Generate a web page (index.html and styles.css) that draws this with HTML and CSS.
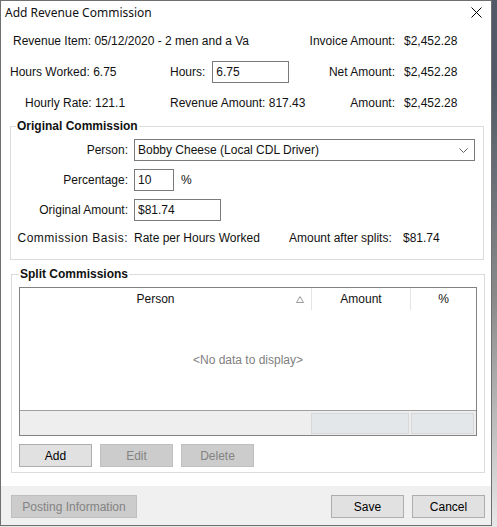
FILE: index.html
```html
<!DOCTYPE html>
<html lang="en">
<head>
    <meta charset="UTF-8">
    <title>Add Revenue Commission</title>
    <link rel="stylesheet" href="styles.css">
</head>
<body>

    <div class="dialog">

        <!-- Title bar -->
        <div class="titlebar">
            <span class="title">Add Revenue Commission</span>
            <svg class="close" width="11" height="11" viewBox="0 0 11 11">
                <path d="M0.5 0.5 L10.5 10.5 M10.5 0.5 L0.5 10.5" stroke="#000" stroke-width="1" fill="none"/>
            </svg>
        </div>

        <!-- Revenue info -->
        <div class="info">
            <div class="cell span2 pad13">Revenue Item: 05/12/2020 - 2 men and a Va</div>
            <div class="cell right">Invoice Amount:</div>
            <div class="cell value">$2,452.28</div>

            <div class="cell pad10">Hours Worked: 6.75</div>
            <div class="cell mid">Hours: <input class="box hours" type="text" value="6.75"></div>
            <div class="cell right">Net Amount:</div>
            <div class="cell value">$2,452.28</div>

            <div class="cell pad25">Hourly Rate: 121.1</div>
            <div class="cell mid">Revenue Amount: 817.43</div>
            <div class="cell right">Amount:</div>
            <div class="cell value">$2,452.28</div>
        </div>

        <!-- Original Commission -->
        <fieldset class="group original">
            <legend>Original Commission</legend>
            <div class="form-grid">
                <label>Person:</label>
                <div class="select">
                    <span>Bobby Cheese (Local CDL Driver)</span>
                    <svg width="9" height="5" viewBox="0 0 9 5">
                        <path d="M0.5 0.5 L4.5 4.5 L8.5 0.5" stroke="#606060" stroke-width="1" fill="none"/>
                    </svg>
                </div>

                <label>Percentage:</label>
                <div class="inline">
                    <input class="box pct" type="text" value="10">
                    <span class="pct-sign">%</span>
                </div>

                <label>Original Amount:</label>
                <div class="inline">
                    <input class="box amount" type="text" value="$81.74">
                </div>

                <label class="basis">Commission Basis:</label>
                <div class="inline">
                    <span class="basis-value">Rate per Hours Worked</span>
                    <span class="splits-label">Amount after splits:</span>
                    <span>$81.74</span>
                </div>
            </div>
        </fieldset>

        <!-- Split Commissions -->
        <fieldset class="group splits">
            <legend>Split Commissions</legend>
            <div class="grid">
                <div class="grid-head">
                    <div class="col col-person">
                        <span>Person</span>
                        <svg class="sort" width="8" height="7" viewBox="0 0 8 7">
                            <path d="M4 0.5 L7.5 6.5 L0.5 6.5 Z" stroke="#9a9a9a" stroke-width="1" fill="none"/>
                        </svg>
                    </div>
                    <div class="col col-amount">Amount</div>
                    <div class="col col-pct">%</div>
                </div>
                <div class="grid-body">&lt;No data to display&gt;</div>
                <div class="grid-foot">
                    <div class="foot-cell foot-amount"></div>
                    <div class="foot-cell foot-pct"></div>
                </div>
            </div>
            <div class="buttons">
                <button class="btn">Add</button>
                <button class="btn" disabled>Edit</button>
                <button class="btn" disabled>Delete</button>
            </div>
        </fieldset>

        <!-- Footer -->
        <div class="footer">
            <button class="btn wide" disabled>Posting Information</button>
            <div class="footer-right">
                <button class="btn">Save</button>
                <button class="btn">Cancel</button>
            </div>
        </div>

    </div>

</body>
</html>
```

FILE: styles.css
```css
html, body {
    margin: 0;
    padding: 0;
}
body {
    font-family: "Liberation Sans", Arial, sans-serif;
    font-size: 12px;
    color: #111;
    background: linear-gradient(#4f5a66 0, #4f5a66 80px, #8a8a8a 300px, #e6e6e6 520px);
    width: 497px;
    height: 527px;
    overflow: hidden;
}
.dialog {
    width: 490px;
    height: 524px;
    border: 1px solid #6f6f6f;
    background: #fff;
    display: flex;
    flex-direction: column;
}

/* title bar */
.titlebar {
    height: 24px;
    display: flex;
    align-items: center;
    justify-content: space-between;
    padding: 0 5px 0 4px;
    flex-shrink: 0;
}
.title {
    font-family: "Noto Sans", "Liberation Sans", sans-serif;
    font-size: 12px;
    margin-top: -1px;
}
.close {
    margin-right: 4px;
    margin-top: -2px;
}

/* info grid */
.info {
    display: grid;
    grid-template-columns: 159px 140px 95px 1fr;
    grid-auto-rows: 31px;
    flex-shrink: 0;
}
.cell {
    display: flex;
    align-items: center;
    white-space: nowrap;
}
.span2 {
    grid-column: span 2;
}
.pad13 { padding-left: 12px; }
.pad10 { padding-left: 9px; }
.pad25 { padding-left: 24px; }
.mid {
    padding-left: 10px;
}
.right {
    justify-content: flex-end;
}
.value {
    padding-left: 9px;
}

.box {
    font-family: "Liberation Sans", Arial, sans-serif;
    font-size: 12px;
    color: #111;
    height: 22px;
    box-sizing: border-box;
    border: 1px solid #7a7a7a;
    padding: 0 3px;
    margin: 0;
    outline: none;
}
.hours {
    width: 77px;
    margin-left: 7px;
}

/* group boxes */
.group {
    border: 1px solid #dcdcdc;
    margin: 1px 7px 0 9px;
    padding: 6px 8px 12px 5px;
    min-width: 0;
    flex-shrink: 0;
}
.group legend {
    font-weight: bold;
    padding: 0 1px;
    line-height: 14px;
}
.form-grid {
    display: grid;
    grid-template-columns: 112px 1fr;
    grid-template-rows: 22px 22px 22px 18px;
    column-gap: 6px;
    row-gap: 8px;
}
.form-grid label {
    display: flex;
    align-items: center;
    justify-content: flex-end;
    white-space: nowrap;
}
.form-grid .basis {
    letter-spacing: 0.5px;
}
.select {
    border: 1px solid #7a7a7a;
    display: flex;
    align-items: center;
    justify-content: space-between;
    padding: 0 6px 0 3px;
}
.inline {
    display: flex;
    align-items: center;
    white-space: nowrap;
}
.pct {
    width: 40px;
}
.pct-sign {
    margin-left: 7px;
}
.amount {
    width: 87px;
}
.basis-value {
    width: 155px;
}
.splits-label {
    width: 114px;
}

/* split commissions */
.splits {
    margin: 7px 6px 0 10px;
    padding: 6px 7px 5px 7px;
}
.grid {
    border: 1px solid #828282;
    display: flex;
    flex-direction: column;
}
.grid-head {
    display: flex;
    height: 22px;
}
.col {
    display: flex;
    align-items: center;
    justify-content: center;
    box-sizing: border-box;
}
.col-person {
    width: 291px;
    padding-right: 20px;
    position: relative;
}
.sort {
    position: absolute;
    right: 7px;
    top: 8px;
}
.col-amount {
    width: 100px;
    border-left: 1px solid #e4e4e4;
    border-right: 1px solid #e4e4e4;
}
.col-pct {
    flex: 1;
}
.grid-body {
    height: 100px;
    display: flex;
    align-items: center;
    justify-content: center;
    color: #808080;
}
.grid-foot {
    height: 24px;
    border-top: 1px solid #a0a0a0;
    background: #eeeeee;
    display: flex;
    justify-content: flex-end;
    align-items: center;
    gap: 2px;
    padding-right: 2px;
}
.foot-cell {
    height: 21px;
    box-sizing: border-box;
    background: #e4e7e9;
    border: 1px solid #d6d8da;
}
.foot-amount {
    width: 98px;
}
.foot-pct {
    width: 63px;
}

/* buttons */
.buttons {
    display: flex;
    gap: 8px;
    margin-top: 8px;
}
.btn {
    font-family: "Liberation Sans", Arial, sans-serif;
    font-size: 12px;
    width: 73px;
    height: 23px;
    box-sizing: border-box;
    background: #e1e1e1;
    border: 1px solid #adadad;
    color: #000;
    padding: 0;
    margin: 0;
}
.btn:disabled {
    background: #cccccc;
    border-color: #bfbfbf;
    color: #838383;
}
.wide {
    width: 126px;
}

/* footer */
.footer {
    margin-top: auto;
    height: 39px;
    box-sizing: border-box;
    background: #f0f0f0;
    display: flex;
    justify-content: space-between;
    padding: 9px 6px 0 10px;
}
.footer-right {
    display: flex;
    gap: 8px;
}
```
